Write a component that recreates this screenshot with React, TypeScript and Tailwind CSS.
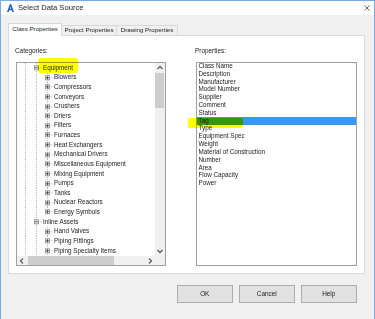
import React from 'react'

type TreeNode = { label: string; level: 1 | 2; last?: boolean }

const TREE: TreeNode[] = [
  { label: 'Equipment', level: 1 },
  { label: 'Blowers', level: 2 },
  { label: 'Compressors', level: 2 },
  { label: 'Conveyors', level: 2 },
  { label: 'Crushers', level: 2 },
  { label: 'Driers', level: 2 },
  { label: 'Filters', level: 2 },
  { label: 'Furnaces', level: 2 },
  { label: 'Heat Exchangers', level: 2 },
  { label: 'Mechanical Drivers', level: 2 },
  { label: 'Miscellaneous Equipment', level: 2 },
  { label: 'Mixing Equipment', level: 2 },
  { label: 'Pumps', level: 2 },
  { label: 'Tanks', level: 2 },
  { label: 'Nuclear Reactors', level: 2 },
  { label: 'Energy Symbols', level: 2, last: true },
  { label: 'Inline Assets', level: 1 },
  { label: 'Hand Valves', level: 2 },
  { label: 'Piping Fittings', level: 2 },
  { label: 'Piping Specialty Items', level: 2 },
]

const PROPERTIES = [
  'Class Name',
  'Description',
  'Manufacturer',
  'Model Number',
  'Supplier',
  'Comment',
  'Status',
  'Tag',
  'Type',
  'Equipment Spec',
  'Weight',
  'Material of Construction',
  'Number',
  'Area',
  'Flow Capacity',
  'Power',
]

const ROW_H = 9.63

function TreeLines({ node }: { node: TreeNode }) {
  const h = ROW_H
  const cy = h / 2
  const w = node.level === 1 ? 26 : 37
  const bx = node.level === 1 ? 19.5 : 30.5
  const dot = { stroke: '#b8b8b8', strokeWidth: 1, strokeDasharray: '1 1' }
  return (
    <svg width={w} height={h} viewBox={`0 0 ${w} ${h}`} className="shrink-0">
      <line x1="8.5" y1="0" x2="8.5" y2={h} {...dot} />
      <line x1="19.5" y1="0" x2="19.5" y2={h} {...dot} />
      {node.level === 2 && (
        <line x1="30.5" y1="0" x2="30.5" y2={node.last ? cy : h} {...dot} />
      )}
      <line x1={bx + 3} y1={cy} x2={w - 1} y2={cy} {...dot} />
      <rect x={bx - 2} y={cy - 2} width="4" height="4" fill="#ffffff" stroke="#9a9a9a" strokeWidth="1" />
      <line x1={bx - 1.5} y1={cy} x2={bx + 1.5} y2={cy} stroke="#444444" strokeWidth="0.9" />
      {node.level === 2 && (
        <line x1={bx} y1={cy - 1.5} x2={bx} y2={cy + 1.5} stroke="#444444" strokeWidth="0.9" />
      )}
    </svg>
  )
}

function Chevron({ dir }: { dir: 'up' | 'down' | 'left' | 'right' }) {
  const pts = {
    up: '2.5,6 5,3.5 7.5,6',
    down: '2.5,4 5,6.5 7.5,4',
    left: '6,2.5 3.5,5 6,7.5',
    right: '4,2.5 6.5,5 4,7.5',
  }[dir]
  return (
    <svg width="10" height="10" viewBox="0 0 10 10">
      <polyline points={pts} fill="none" stroke="#606060" strokeWidth="1.3" />
    </svg>
  )
}

export default function App() {
  return (
    <div className="relative h-[319px] w-[375px] overflow-hidden border-x border-t border-[#78ade4] bg-[#f0f0f0] font-['Liberation_Sans',Arial,sans-serif] text-[6.3px] text-[#1a1a1a]">
      {/* title bar */}
      <div className="flex h-[14px] items-center bg-white pl-[6px] pr-[4px]">
        <svg width="7" height="8" viewBox="0 0 7 8">
          <path
            d="M0 8 L2.9 0 L4.1 0 L7 8 L5.3 8 L4.7 6.2 L2.3 6.2 L1.7 8 Z M2.8 4.7 L4.2 4.7 L3.5 2.5 Z"
            fill="#1f63b3"
            fillRule="evenodd"
          />
        </svg>
        <span className="ml-[4px] text-[7.6px] leading-none text-[#1a1a1a]">Select Data Source</span>
        <svg className="ml-auto" width="6" height="6" viewBox="0 0 6 6">
          <path d="M0.5 0.5 L5.5 5.5 M5.5 0.5 L0.5 5.5" stroke="#444" strokeWidth="0.8" />
        </svg>
      </div>

      {/* tabs */}
      <div className="mt-[8px] flex h-[13px] items-end pl-[7px] text-[6.2px] leading-none">
        <div className="relative z-10 flex h-[13px] w-[54px] items-center justify-center border-x border-t border-[#d9d9d9] bg-white pb-[1px]">
          Class Properties
        </div>
        <div className="mb-[1px] flex h-[10px] w-[55px] items-center justify-center border-t border-r border-[#d9d9d9]">
          Project Properties
        </div>
        <div className="mb-[1px] flex h-[10px] w-[61px] items-center justify-center border-t border-r border-[#d9d9d9]">
          Drawing Properties
        </div>
      </div>

      {/* tab panel */}
      <div className="-mt-[1px] ml-[7px] flex h-[239px] w-[357px] gap-[30px] border border-[#d9d9d9] bg-white pl-[7px] pt-[11px]">
        {/* categories */}
        <div className="flex flex-col">
          <div className="-ml-[1px] h-[8px] text-[6.4px] leading-[8px]">Categories:</div>
          <div className="mt-[7px] flex h-[204px] w-[150px] flex-col border border-[#a0a0a0] bg-white">
            <div className="flex h-[193px]">
              <div className="w-[138px] overflow-hidden">
                {TREE.map(node => (
                  <div key={node.label} className="flex h-[9.63px] items-center whitespace-nowrap leading-none">
                    <TreeLines node={node} />
                    <span>{node.label}</span>
                  </div>
                ))}
              </div>
              <div className="flex w-[10px] flex-col bg-[#f0f0f0]">
                <div className="flex h-[10px] items-center justify-center">
                  <Chevron dir="up" />
                </div>
                <div className="h-[35px] w-[9px] bg-[#cdcdcd]" />
                <div className="flex-1" />
                <div className="flex h-[10px] items-center justify-center">
                  <Chevron dir="down" />
                </div>
              </div>
            </div>
            <div className="flex h-[9px]">
              <div className="flex w-[138px] bg-[#f0f0f0]">
                <div className="flex w-[10px] items-center justify-center">
                  <Chevron dir="left" />
                </div>
                <div className="ml-[1px] h-[9px] w-[86px] bg-[#cdcdcd]" />
                <div className="flex-1" />
                <div className="flex w-[10px] items-center justify-center">
                  <Chevron dir="right" />
                </div>
              </div>
              <div className="w-[10px] bg-[#f0f0f0]" />
            </div>
          </div>
        </div>

        {/* properties */}
        <div className="flex flex-col">
          <div className="-ml-[1px] h-[8px] text-[6.4px] leading-[8px]">Properties:</div>
          <div className="mt-[7px] h-[204px] w-[161px] overflow-hidden border border-[#a0a0a0] bg-white">
            <div className="-mt-[0.8px]">
              {PROPERTIES.map(p => (
                <div
                  key={p}
                  className={
                    p === 'Tag'
                      ? 'flex h-[7.82px] items-center bg-[#3797f2] pl-[1.5px] leading-none'
                      : 'flex h-[7.82px] items-center pl-[1.5px] leading-none'
                  }
                >
                  {p}
                </div>
              ))}
            </div>
          </div>
        </div>
      </div>

      {/* buttons */}
      <div className="mt-[11px] flex justify-end gap-[5.5px] pr-[17px]">
        {['OK', 'Cancel', 'Help'].map(b => (
          <button
            key={b}
            className="flex h-[18px] w-[56.5px] items-center justify-center border border-[#adadad] bg-[#e1e1e1] text-[6.4px] leading-none"
          >
            {b}
          </button>
        ))}
      </div>

      {/* highlighter marks */}
      <div className="pointer-events-none absolute left-[37px] top-[57px] h-[15px] w-[40px] rounded-[3px] bg-[#ffff00] mix-blend-multiply" />
      <div className="pointer-events-none absolute left-[187px] top-[117px] h-[9.5px] w-[55px] rounded-[2px] bg-[#ffff00] mix-blend-multiply" />
    </div>
  )
}
